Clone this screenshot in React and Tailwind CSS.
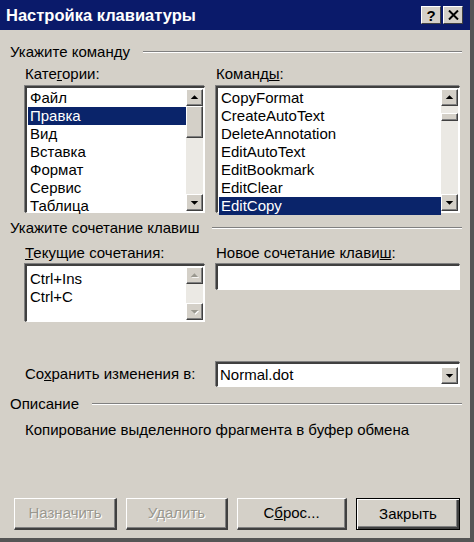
import React from 'react';

const font = { fontFamily: '"Liberation Sans", Arial, sans-serif' };

function Arrow({ dir = 'up', disabled = false }) {
    const d = dir === 'up' ? 'M4 9 L8 5 L12 9 Z' : 'M4 6 L8 10 L12 6 Z';
    return (
        <div className="w-[17px] h-[17px] bg-[#d4d0c8] border-t border-l border-t-white border-l-white border-r border-b border-r-[#404040] border-b-[#404040] shadow-[inset_-1px_-1px_0_#808080] flex items-center justify-center">
            <svg width="16" height="15" viewBox="0 0 16 15">
                {disabled && <path d={d} fill="#ffffff" transform="translate(1 1)" />}
                <path d={d} fill={disabled ? '#9a988f' : '#000000'} />
            </svg>
        </div>
    );
}

function ScrollBar({ thumbTop = 0, thumbHeight = 0, disabled = false }) {
    return (
        <div className="w-[17px] h-full flex flex-col bg-[#ebe9e4]">
            <Arrow dir="up" disabled={disabled} />
            <div className="flex-1 relative">
                {thumbHeight > 0 && (
                    <div
                        className="absolute left-0 w-[17px] bg-[#d4d0c8] border-t border-l border-t-white border-l-white border-r border-b border-r-[#404040] border-b-[#404040] shadow-[inset_-1px_-1px_0_#808080]"
                        style={{ top: thumbTop, height: thumbHeight }}
                    />
                )}
            </div>
            <Arrow dir="down" disabled={disabled} />
        </div>
    );
}

function Sunken({ className = '', children }) {
    return (
        <div className={`bg-white border-t-2 border-l-2 border-t-[#404040] border-l-[#404040] border-r border-b border-r-white border-b-white shadow-[-1px_-1px_0_#808080,1px_1px_0_#d4d0c8] ${className}`}>
            {children}
        </div>
    );
}

function ListBox({ items, selected, thumbTop, thumbHeight, className = '' }) {
    return (
        <Sunken className={`flex ${className}`}>
            <div className="flex-1 pt-[1px] pl-[1px]">
                {items.map((it) => (
                    <div
                        key={it}
                        className={`h-[18px] leading-[18px] pl-[2px] text-[15px] ${it === selected ? 'bg-[#0a246a] text-white' : 'text-black'}`}
                    >
                        {it}
                    </div>
                ))}
            </div>
            <div className="py-[1px] pr-[1px]">
                <ScrollBar thumbTop={thumbTop} thumbHeight={thumbHeight} />
            </div>
        </Sunken>
    );
}

function GroupHeader({ children }) {
    return (
        <div className="flex items-center h-[18px]">
            <span className="text-[15px] text-black pr-[13px]">{children}</span>
            <div className="flex-1 flex flex-col">
                <div className="h-px bg-[#808080]" />
                <div className="h-px bg-white" />
            </div>
        </div>
    );
}

function Button({ children, disabled = false, primary = false }) {
    return (
        <div
            className={`h-[32px] flex items-center justify-center text-[15px] bg-[#d4d0c8] ${
                primary
                    ? 'border border-black shadow-[inset_1px_1px_0_#ffffff,inset_-2px_-2px_0_#404040,inset_-3px_-3px_0_#808080]'
                    : 'border-t border-l border-t-white border-l-white border-r-2 border-b-2 border-r-[#404040] border-b-[#404040] shadow-[inset_-1px_-1px_0_#808080]'
            } ${disabled ? 'text-[#9a988f] [text-shadow:1px_1px_0_#ffffff]' : 'text-black'}`}
        >
            {children}
        </div>
    );
}

export default function App() {
    const categories = ['Файл', 'Правка', 'Вид', 'Вставка', 'Формат', 'Сервис', 'Таблица'];
    const commands = ['CopyFormat', 'CreateAutoText', 'DeleteAnnotation', 'EditAutoText', 'EditBookmark', 'EditClear', 'EditCopy'];

    return (
        <div style={font} className="w-[474px] h-[542px] bg-[#d4d0c8] border-r-[4px] border-b-[4px] border-r-[#555] border-b-[#555] flex flex-col overflow-hidden">
            {/* title bar */}
            <div className="h-[30px] bg-[#0a1a6a] flex items-center pl-[6px] pr-[7px]">
                <span className="text-white font-bold text-[16.5px] flex-1">Настройка клавиатуры</span>
                <div className="flex gap-[2px]">
                    <div className="w-[20px] h-[18px] bg-[#d4d0c8] border-t border-l border-t-white border-l-white border-r border-b border-r-[#404040] border-b-[#404040] flex items-center justify-center text-[15px] font-bold leading-none">?</div>
                    <div className="w-[20px] h-[18px] bg-[#d4d0c8] border-t border-l border-t-white border-l-white border-r border-b border-r-[#404040] border-b-[#404040] flex items-center justify-center">
                        <svg width="11" height="10" viewBox="0 0 11 10">
                            <path d="M1 0.5 L10 9.5 M10 0.5 L1 9.5" stroke="#000" strokeWidth="2" />
                        </svg>
                    </div>
                </div>
            </div>

            <div className="flex-1 flex flex-col pl-[10px] pr-[8px]">
                <div className="mt-[13px]">
                    <GroupHeader>Укажите команду</GroupHeader>
                </div>

                <div className="mt-[4px] pl-[15px] pr-[2px] grid grid-cols-[180px_1fr] gap-x-[11px]">
                    <div className="text-[15px] h-[18px] leading-[18px]">
                        Кате<span className="underline">г</span>ории:
                    </div>
                    <div className="text-[15px] h-[18px] leading-[18px]">
                        Команд<span className="underline">ы</span>:
                    </div>
                    <ListBox items={categories} selected="Правка" thumbTop={0} thumbHeight={32} className="mt-[3px] h-[127px]" />
                    <ListBox items={commands} selected="EditCopy" thumbTop={7} thumbHeight={8} className="mt-[3px] h-[127px]" />
                </div>

                <div className="mt-[6px]">
                    <GroupHeader>Укажите сочетание клавиш</GroupHeader>
                </div>

                <div className="mt-[7px] pl-[15px] pr-[2px] grid grid-cols-[180px_1fr] gap-x-[11px]">
                    <div className="text-[15px] h-[18px] leading-[18px]">
                        <span className="underline">Т</span>екущие сочетания:
                    </div>
                    <div className="text-[15px] h-[18px] leading-[18px]">
                        Новое сочетание клави<span className="underline">ш</span>:
                    </div>
                    <Sunken className="mt-[2px] h-[58px] flex">
                        <div className="flex-1 pt-[4px] pl-[3px] text-[15px] leading-[18px]">
                            <div>Ctrl+Ins</div>
                            <div>Ctrl+C</div>
                        </div>
                        <div className="py-[1px] pr-[1px]">
                            <ScrollBar disabled />
                        </div>
                    </Sunken>
                    <Sunken className="mt-[2px] h-[26px] self-start" />
                </div>

                <div className="mt-[40px] pl-[15px] pr-[2px] grid grid-cols-[180px_1fr] gap-x-[11px] items-center">
                    <div className="text-[15px]">
                        Со<span className="underline">х</span>ранить изменения в:
                    </div>
                    <Sunken className="h-[25px] flex items-center">
                        <div className="flex-1 pl-[2px] text-[15px]">Normal.dot</div>
                        <div className="pr-[1px]">
                            <Arrow dir="down" />
                        </div>
                    </Sunken>
                </div>

                <div className="mt-[8px]">
                    <GroupHeader>Описание</GroupHeader>
                </div>

                <div className="mt-[6px] pl-[15px] text-[15px]">
                    Копирование выделенного фрагмента в буфер обмена
                </div>

                <div className="mt-auto mb-[8px] pl-[4px] grid grid-cols-[103px_102px_110px_104px] gap-x-[9px]">
                    <Button disabled>Назначить</Button>
                    <Button disabled>Удалить</Button>
                    <Button>
                        С<span className="underline">б</span>рос...
                    </Button>
                    <Button primary>Закрыть</Button>
                </div>
            </div>
        </div>
    );
}
